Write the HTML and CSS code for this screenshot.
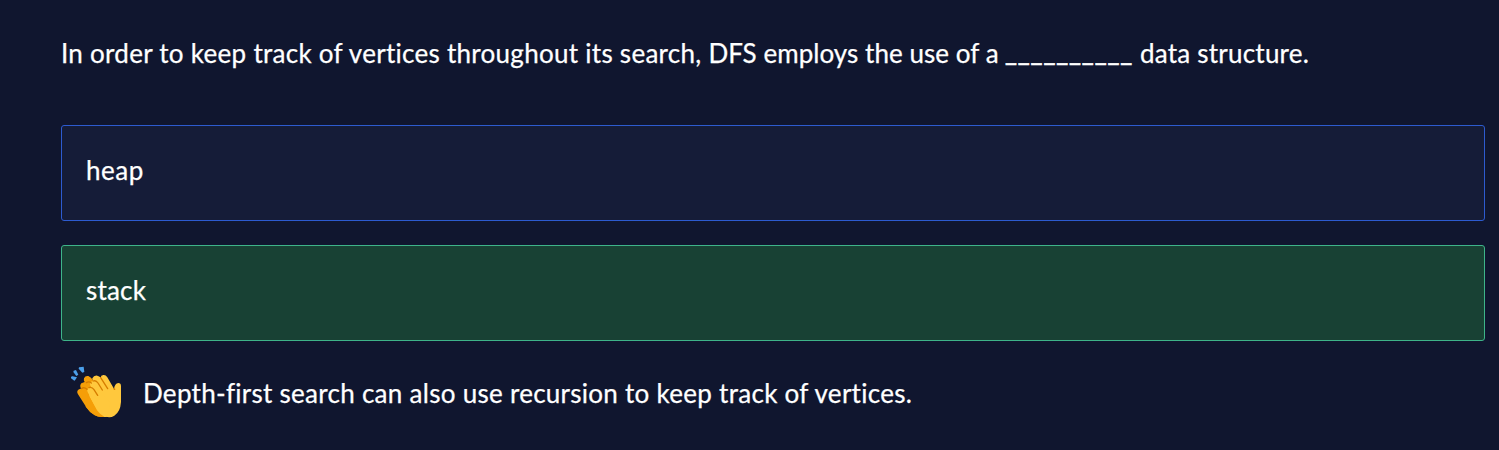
FILE: index.html
```
<!DOCTYPE html>
<html lang="en">
<head>
<meta charset="utf-8">
<title>Depth-first search quiz</title>
<link rel="stylesheet" href="styles.css">
</head>
<body>
<main class="quiz">
  <p class="question"><span class="lead">In order to keep track of vertices throughout its search, <span class="clause">DFS employs the use of a</span></span><span class="blank">__________</span><span class="tail">data structure.</span></p>
  <div class="answers">
    <div class="answer"><span class="heap">heap</span></div>
    <div class="answer correct"><span class="stack">stack</span></div>
  </div>
  <div class="feedback">
    <svg class="clap" viewBox="30 33 156 156" aria-hidden="true">
      <g fill="#4b9fea">
        <path d="M57 37l14-2 2 16-6 2-11-12z"/>
        <path d="M41 47l7-2 7 14-6 4-9-12z"/>
        <path d="M33 66q2-3 5-2l13 3-6 9q-2 2-4 0l-8-6z"/>
      </g>
      <path fill="#f59e08" d="M72 70q4-9 13-7l8 5 35 45 3 72q-13 3-26-4-16-9-27-26L54 118q-6-9 3-15l6-2q-5-9 1-16l10-4q-4-5-2-11z"/>
      <path fill="#ffc83d" d="M97 70q5-10 15-8 6 1 10 6 0-7 8-8 7-1 12 7l20 34q2-15 13-17 8 0 8 10v47q-2 30-20 41-13 8-27 2-12-5-24-23L84 113q-5-8 1-13 4-5 8-4-6-10 0-16l7-2q-4-4-3-8z"/>
      <path fill="#ffc83d" d="M88 108l24-5 40 40-10 42q-14 3-25-3-9-19-29-58z"/>
      <path fill="#f59e08" d="M84 118l27 48q8 12 22 19-15 4-29-4-16-10-27-26z"/>
      <g fill="none" stroke="#d67d00" stroke-width="4" stroke-linecap="round">
        <path d="M79 83q8-5 15 1M64 101q8-6 17 2"/>
        <path d="M100 78q8-3 14 6l13 21M122 68l21 33M87 98q9-3 15 6l11 17"/>
        <path d="M162 101l2 2"/>
      </g>
    </svg>
    <span class="note">Depth-first search can also use recursion to keep track of vertices.</span>
  </div>
</main>
</body>
</html>
```
FILE: styles.css
```
* { box-sizing: border-box; }
body {
  margin: 0;
  background: #10162f;
  color: #fff;
  font: 26px/36px Lato, "Open Sans", sans-serif;
  -webkit-text-stroke: 0.25px #fff;
}
.quiz {
  height: 450px;
  padding: 35px 14px 0 61px;
  overflow: hidden;
}
.question {
  display: flex;
  height: 36px;
  margin: 0 0 54px;
  white-space: nowrap;
}
.lead { width: 944px; letter-spacing: 0.28px; }
.clause { letter-spacing: 0.05px; }
.blank {
  width: 135px;
  margin-top: -2px;
  letter-spacing: 0.87px;
  -webkit-text-stroke-width: 0.6px;
}
.tail { letter-spacing: 0.22px; }
.answers { display: grid; gap: 24px; }
.answer {
  display: flex;
  align-items: center;
  height: 96px;
  padding: 0 24px 6px;
  border: 1px solid #2d5bd0;
  border-radius: 3px;
  background: #151c38;
}
.heap { letter-spacing: 0.5px; }
.stack { letter-spacing: 0.2px; }
.correct { border-color: #3eb489; background: #184134; }
.feedback {
  display: flex;
  gap: 21px;
  height: 52px;
  margin-top: 25px;
  padding-left: 9px;
}
.clap { width: 52px; height: 52px; flex: none; }
.note { margin-top: 9px; white-space: nowrap; letter-spacing: 0.28px; }
```
